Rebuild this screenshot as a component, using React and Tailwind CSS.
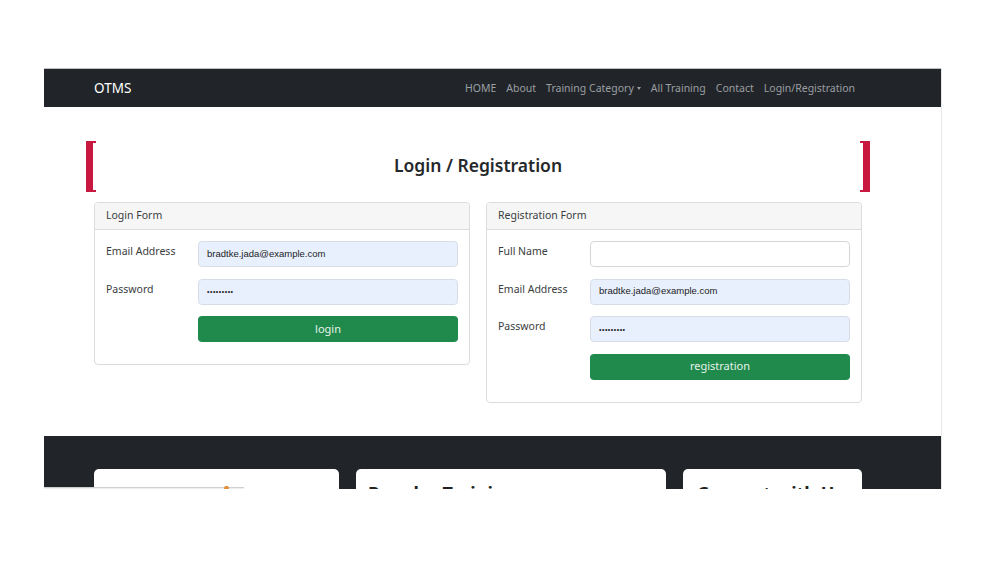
import React from "react";

const sans = { fontFamily: '"Noto Sans", "Open Sans", sans-serif' };
const arial = { fontFamily: '"Liberation Sans", Arial, sans-serif' };

function Bracket({ side }) {
  // thick crimson bracket with short serifs at both ends
  const left = side === "left";
  return (
    <div className={`relative w-[10px] h-[51px] flex ${left ? "justify-start" : "justify-end"}`}>
      <div className="w-[7px] h-full bg-[#c8183f]" />
      <div className={`absolute top-0 ${left ? "left-0" : "right-0"} w-[10px] h-[2px] bg-[#c8183f]`} />
      <div className={`absolute bottom-0 ${left ? "left-0" : "right-0"} w-[10px] h-[2px] bg-[#c8183f]`} />
    </div>
  );
}

function Field({ label, value, password, filled = true }) {
  return (
    <div className="flex items-start">
      <div className="w-[92px] pt-[2px] text-[10.5px] text-[#3a3d40] leading-[16px]" style={sans}>
        {label}
      </div>
      <div
        className={`w-[260px] h-[26px] rounded-[4px] border ${
          filled ? "bg-[#e8f0fe] border-[#d6dde6]" : "bg-white border-[#d4d7da]"
        } flex items-center px-[8px] text-[9.5px] text-[#222]`}
        style={arial}
      >
        {password ? <span className="text-[7px] tracking-[0.5px] leading-none">•••••••••</span> : value}
      </div>
    </div>
  );
}

function SubmitButton({ children }) {
  return (
    <div className="flex">
      <div className="w-[92px]" />
      <div
        className="w-[260px] h-[26px] rounded-[4px] bg-[#1f8a4c] flex items-center justify-center text-[11px] text-[#e6f2ea]"
        style={sans}
      >
        {children}
      </div>
    </div>
  );
}

function FormCard({ title, children }) {
  return (
    <div className="w-[376px] border border-[#dcdcdc] rounded-[4px] bg-white self-start">
      <div
        className="h-[27px] bg-[#f6f6f6] border-b border-[#dcdcdc] rounded-t-[4px] flex items-center px-[11px] text-[10.5px] text-[#3a3d40]"
        style={sans}
      >
        {title}
      </div>
      <div className="px-[11px] pt-[11px] pb-[22px] flex flex-col gap-[11.5px]">{children}</div>
    </div>
  );
}

const links = ["HOME", "About", "Training Category", "All Training", "Contact", "Login/Registration"];

export default function App() {
  return (
    <div className="w-[1000px] h-[563px] bg-white pt-[68px] pl-[44px]">
      <div className="relative w-[898px] h-[421px] overflow-hidden border-r border-[#e6e6e6] bg-white">
        {/* top navigation */}
        <nav className="h-[39px] bg-[#212529] border-t border-[#bfbfbf] flex items-center pl-[50px] pr-[86px] pt-[1px]" style={sans}>
          <div className="text-[13.5px] text-white">OTMS</div>
          <div className="ml-auto flex items-center gap-[10px] text-[10.5px] text-[#9b9ea2]">
            {links.map((l) =>
              l === "Training Category" ? (
                <span key={l} className="flex items-center">
                  {l}
                  <span className="ml-[3px] inline-block border-x-[2.5px] border-x-transparent border-t-[3px] border-t-[#9b9ea2]" />
                </span>
              ) : (
                <span key={l}>{l}</span>
              )
            )}
          </div>
        </nav>

        {/* page body */}
        <div className="pl-[42px] pt-[34px]">
          <div className="w-[784px]">
            <div className="flex items-center justify-between h-[51px]">
              <Bracket side="left" />
              <h1 className="text-[17.5px] font-semibold text-[#25282b] pb-[3px]" style={sans}>
                Login / Registration
              </h1>
              <Bracket side="right" />
            </div>

            <div className="flex gap-[16px] px-[8px] mt-[10px]">
              <FormCard title="Login Form">
                <Field label="Email Address" value="bradtke.jada@example.com" />
                <Field label="Password" password />
                <SubmitButton>login</SubmitButton>
              </FormCard>
              <FormCard title="Registration Form">
                <Field label="Full Name" filled={false} />
                <Field label="Email Address" value="bradtke.jada@example.com" />
                <Field label="Password" password />
                <SubmitButton>registration</SubmitButton>
              </FormCard>
            </div>
          </div>
        </div>

        {/* footer */}
        <footer className="mt-[33px] h-[60px] bg-[#212529] pl-[50px] pt-[33px]">
          <div className="flex gap-[17px]">
            <div className="w-[245px] h-[40px] bg-white rounded-t-[5px]" />
            <div className="w-[310px] h-[40px] bg-white rounded-t-[5px] px-[12px] pt-[15px]">
              <div className="text-[18px] font-bold text-[#222] leading-none" style={sans}>
                Popular Training
              </div>
            </div>
            <div className="w-[179px] h-[40px] bg-white rounded-t-[5px] px-[14px] pt-[15px]">
              <div className="text-[18px] font-bold text-[#222] leading-none whitespace-nowrap" style={sans}>
                Connect with Us
              </div>
            </div>
          </div>
        </footer>

        {/* thin strip along the bottom-left edge */}
        <div className="absolute left-0 bottom-0 w-[200px] h-[2px] bg-[#eeeeee] border-t border-[#cfcfcf]">
          <div className="absolute left-[180px] -top-[2px] w-[5px] h-[4px] rounded-full bg-[#e0913e]" />
        </div>
      </div>
    </div>
  );
}
